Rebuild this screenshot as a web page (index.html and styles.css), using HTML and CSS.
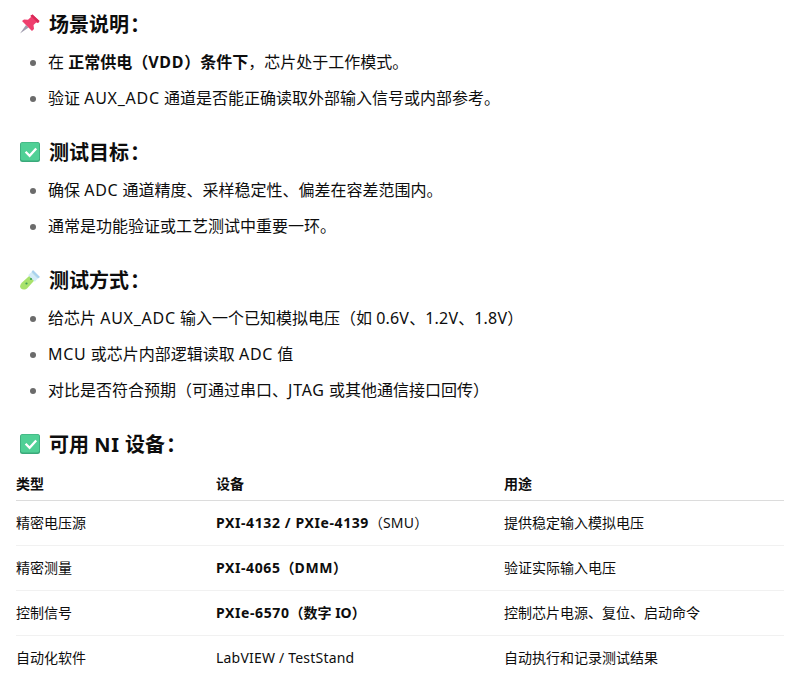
FILE: index.html
```html
<!DOCTYPE html>
<html lang="zh-CN">
<head>
<meta charset="utf-8">
<title>AUX_ADC 测试</title>
<link rel="stylesheet" href="styles.css">
</head>
<body>
<h3 class="heading first">
<svg class="emoji" viewBox="0 0 20 20"><path d="M0 19.6 6 11 8.6 13.4Z" fill="#a09cae"/><path d="M12.5 .5 19.5 7 18 9 16.2 8.4 13.5 11 14 15 12 17 2 7 4 5.4 8 5.8 11 3 10.5 1.8Z" fill="#ef3f6e"/><path d="M12.5 .5 19.5 7 18 9 10.5 1.8Z" fill="#d92a58"/></svg>
<span class="heading-text">场景说明<span class="colon">：</span></span></h3>
<ul class="list">
<li>在 <strong>正常供电（<span class="acr">VDD</span>）条件下</strong>，芯片处于工作模式。</li>
<li>验证 <span class="acr">AUX_ADC</span> 通道是否能正确读取外部输入信号或内部参考。</li>
</ul>
<h3 class="heading">
<svg class="emoji" viewBox="0 0 20 20"><rect width="20" height="20" rx="2.5" fill="#3aa97a"/><rect x=".8" y=".6" width="18.4" height="18" rx="2" fill="#50d096"/><path d="M5.6 9.8 9.6 13.8 16.2 6.4" fill="none" stroke="#fff" stroke-width="2.3"/></svg>
<span class="heading-text">测试目标<span class="colon">：</span></span></h3>
<ul class="list">
<li>确保 <span class="acr">ADC</span> 通道精度、采样稳定性、偏差在容差范围内。</li>
<li>通常是功能验证或工艺测试中重要一环。</li>
</ul>
<h3 class="heading">
<svg class="emoji" viewBox="0 0 20 20"><path d="M12.5 3 17 7.5 7.5 18C5.5 20 2.5 20 1 18.5S0 14.5 2 12.5Z" fill="#a8e26c"/><path d="M11.5 2 18 8.5 14.8 11.8 8.2 5.3Z" fill="#d3ebf9"/><path d="M13 0 20 7 18 8.5 11.5 2Z" fill="#a9d2ee"/><circle cx="11" cy="9" r="1.1" fill="#3f9e58"/><circle cx="6.5" cy="13.5" r="1.1" fill="#3f9e58"/></svg>
<span class="heading-text">测试方式<span class="colon">：</span></span></h3>
<ul class="list">
<li>给芯片 <span class="acr">AUX_ADC</span> 输入一个已知模拟电压（如 <span class="num">0.6V</span>、<span class="num">1.2V</span>、<span class="num">1.8V</span>）</li>
<li><span class="acr">MCU</span> 或芯片内部逻辑读取 <span class="acr">ADC</span> 值</li>
<li>对比是否符合预期（可通过串口、<span class="acr">JTAG</span> 或其他通信接口回传）</li>
</ul>
<h3 class="heading">
<svg class="emoji" viewBox="0 0 20 20"><rect width="20" height="20" rx="2.5" fill="#3aa97a"/><rect x=".8" y=".6" width="18.4" height="18" rx="2" fill="#50d096"/><path d="M5.6 9.8 9.6 13.8 16.2 6.4" fill="none" stroke="#fff" stroke-width="2.3"/></svg>
<span class="heading-text">可用 <span class="acr">NI</span> 设备<span class="colon">：</span></span></h3>
<table class="devices">
<colgroup><col class="col-type"><col class="col-device"><col class="col-use"></colgroup>
<thead><tr><th>类型</th><th>设备</th><th>用途</th></tr></thead>
<tbody>
<tr><td>精密电压源</td><td><strong class="wide">PXI-4132 / PXIe-4139</strong>（<span class="num">SMU</span>）</td><td>提供稳定输入模拟电压</td></tr>
<tr><td>精密测量</td><td><strong><span class="wide">PXI-4065</span>（<span class="wide">DMM</span>）</strong></td><td>验证实际输入电压</td></tr>
<tr><td>控制信号</td><td><strong><span class="wide">PXIe-6570</span>（数字 IO）</strong></td><td>控制芯片电源、复位、启动命令</td></tr>
<tr><td>自动化软件</td><td><span class="num">LabVIEW / TestStand</span></td><td>自动执行和记录测试结果</td></tr>
</tbody>
</table>
</body>
</html>
```
FILE: styles.css
```css
html, body {
  margin: 0;
  padding: 0;
  background: #fff;
}
body {
  padding: 0 16px;
  color: #0d0d0d;
  font-family: "Noto Sans", "Noto Sans CJK SC", sans-serif;
  font-size: 16px;
  line-height: 28px;
  overflow: hidden;
}
.heading {
  display: flex;
  align-items: center;
  gap: 10px;
  height: 32px;
  margin: 0;
  padding-left: 4px;
  font-size: 20px;
  line-height: 32px;
  font-weight: 700;
}
.heading.first { margin-top: 8px; }
.heading-text {
  margin-left: -1px;
  padding-top: 2px;
}
.colon { margin-left: 1px; }
.emoji {
  width: 20px;
  height: 20px;
  flex: none;
}
.list {
  margin: 8px 0 24px;
  padding: 0 0 0 32px;
  list-style: disc;
}
.list li {
  margin: 8px 0;
  padding: 0;
}
.list li::marker { color: #6b6b6b; }
.acr { letter-spacing: 0.75px; }
.num { letter-spacing: 0.2px; }
.wide { letter-spacing: 0.6px; }
.devices {
  width: 768px;
  margin-top: 8px;
  table-layout: fixed;
  border-collapse: collapse;
  font-size: 14px;
  line-height: 24px;
}
.col-type { width: 200px; }
.col-device { width: 288px; }
.col-use { width: 280px; }
.devices th {
  padding: 4px 0;
  text-align: left;
  font-weight: 600;
  border-bottom: 1px solid #dcdcdc;
}
.devices td {
  padding: 10px 0;
  border-bottom: 1px solid #f1f1f1;
}
.devices tbody tr:last-child td { border-bottom: 0; }
strong { font-weight: 700; }
```
